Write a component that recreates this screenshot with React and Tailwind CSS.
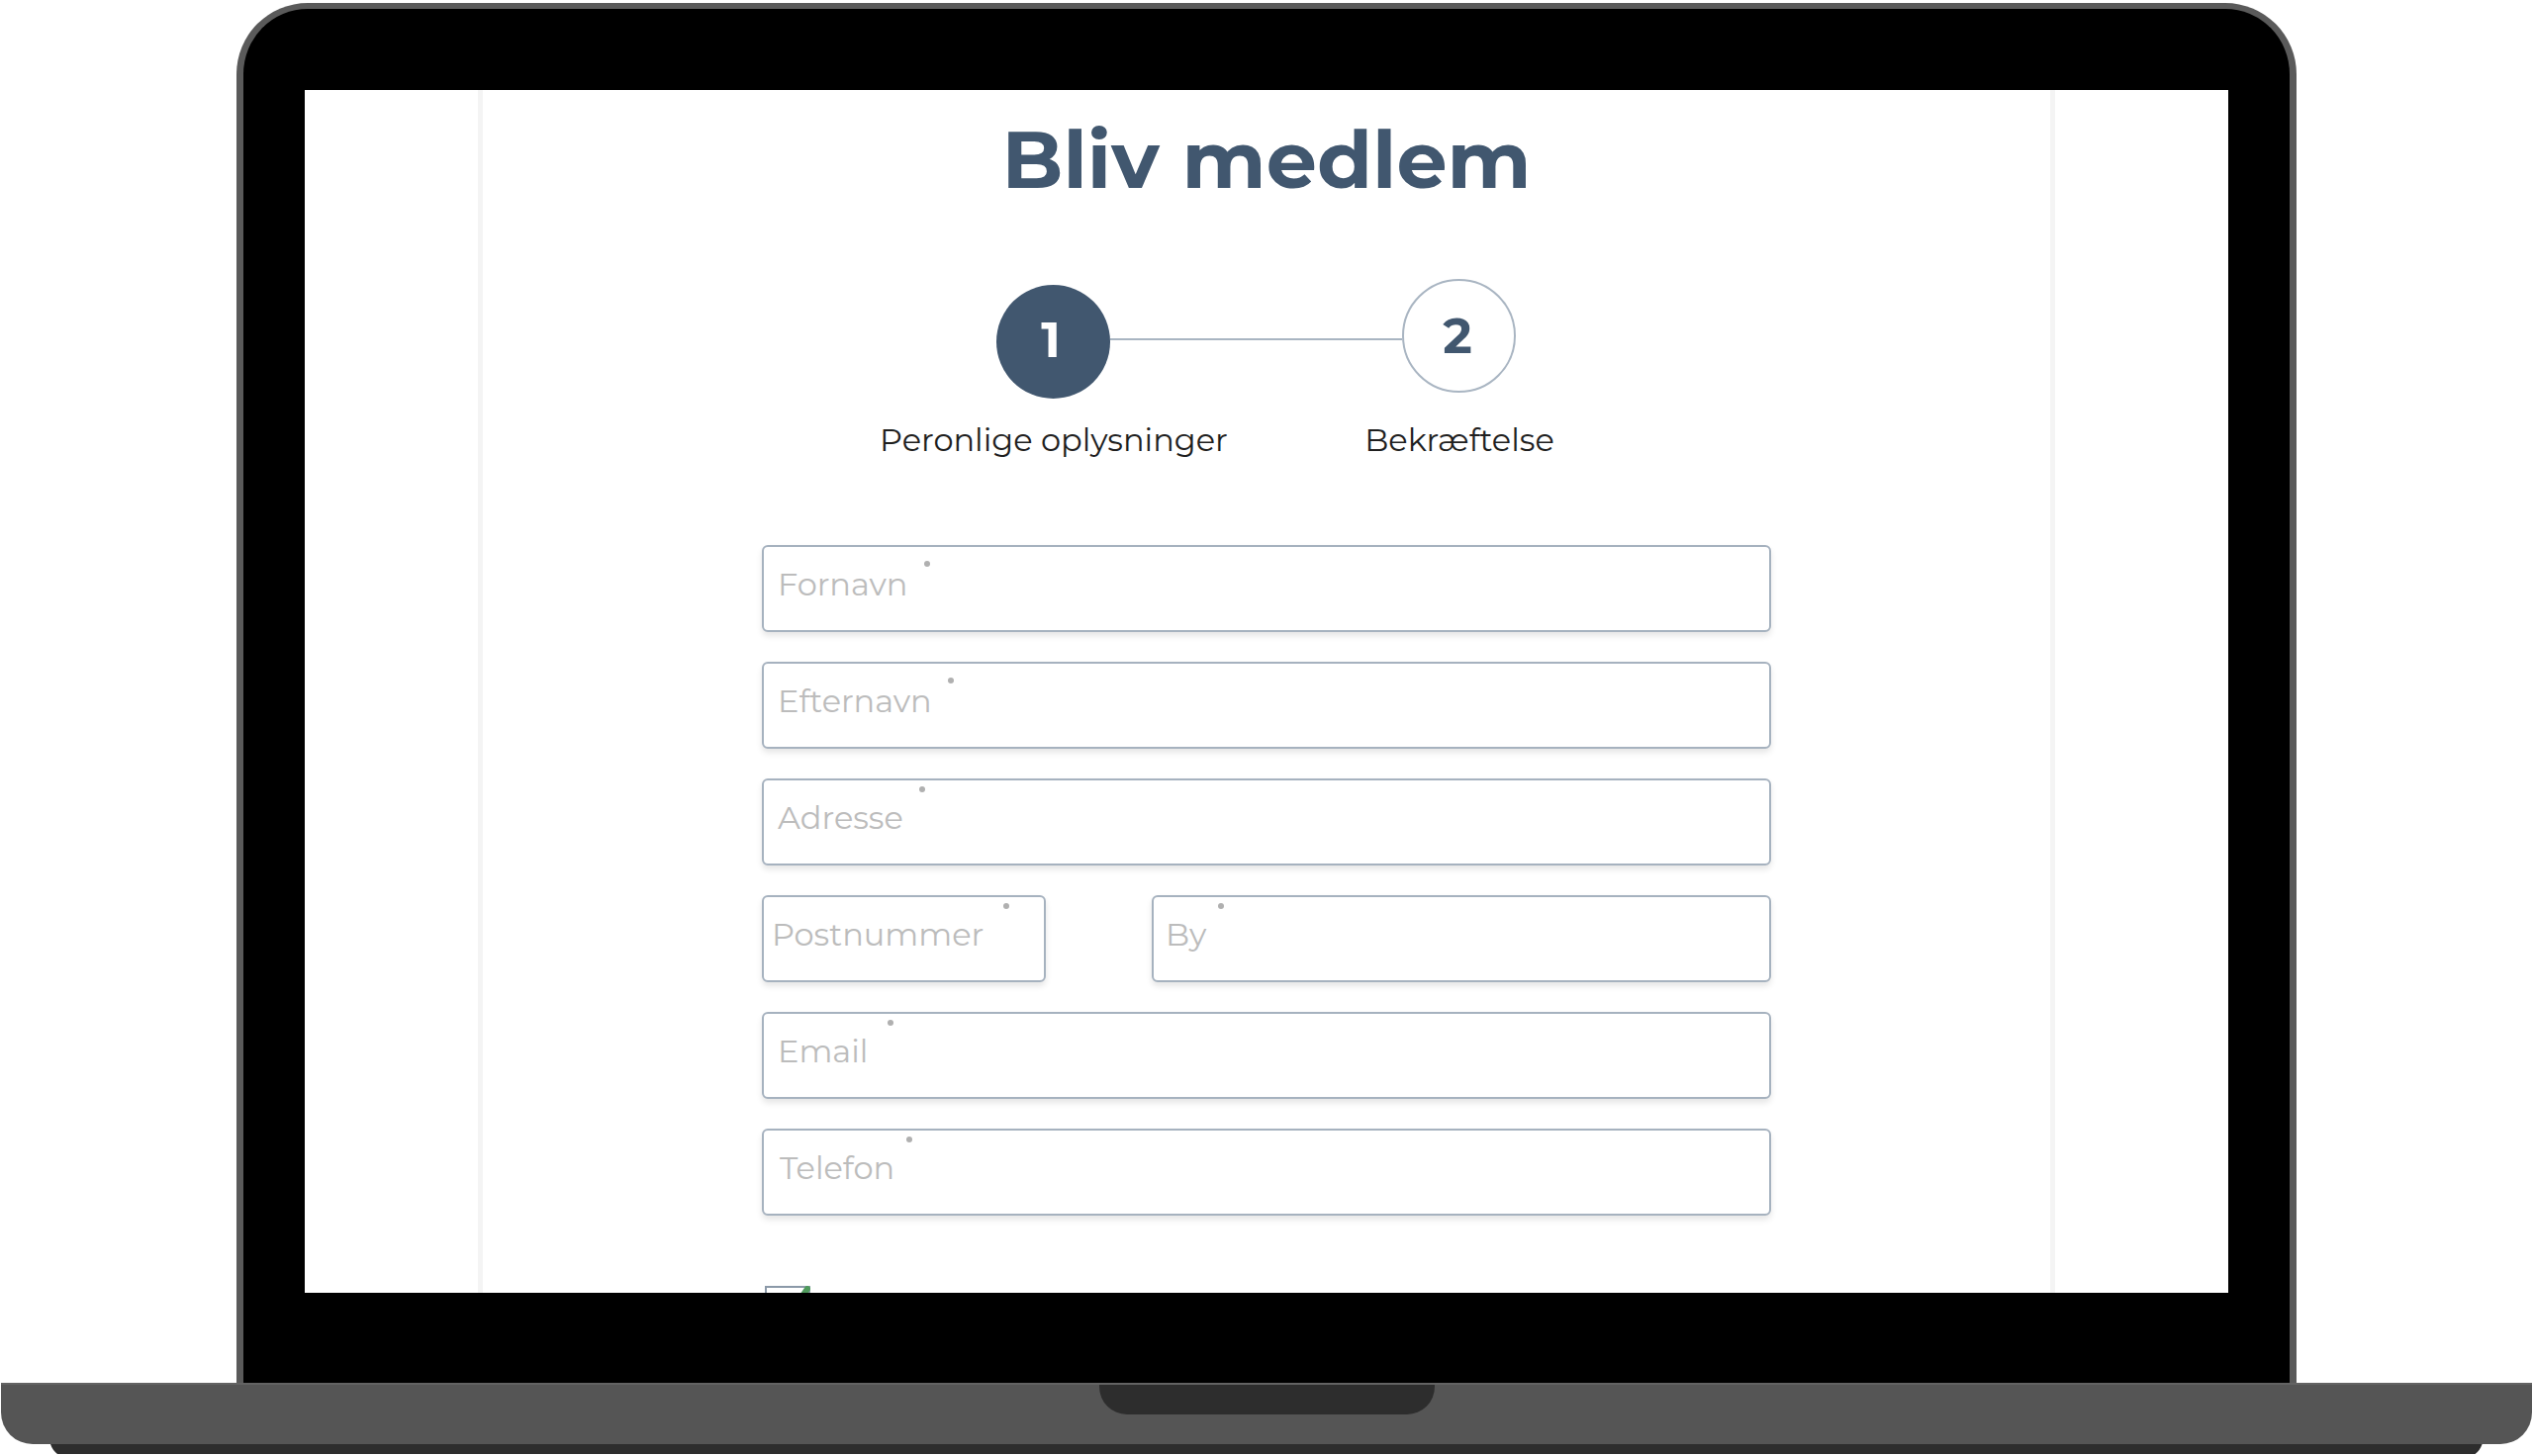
import React from "react";

const steps = [
  { number: 1, label: "Peronlige oplysninger", current: true },
  { number: 2, label: "Bekræftelse", current: false },
];

function Step({ number, label, current }) {
  const line = <span className="h-[2px] flex-1 self-center bg-[#a9b5c2]" />;
  const space = <span className="flex-1" />;
  return (
    <li aria-current={current ? "step" : undefined} className="flex flex-1 flex-col items-center gap-[22px]">
      <div className={current ? "flex h-[121px] w-full items-end" : "flex h-[121px] w-full items-start"}>
        {current ? space : line}
        <span
          className={
            current
              ? "flex size-[115px] items-center justify-center rounded-full bg-[#41576f] pr-1.5 pb-1 text-[50px] font-bold text-white"
              : "flex size-[115px] items-center justify-center rounded-full border-2 border-[#a9b5c2] bg-white pr-1 text-[50px] font-bold text-[#41576f]"
          }
        >
          {number}
        </span>
        {current ? line : space}
      </div>
      <span className="text-[32px] leading-10 whitespace-nowrap text-[#1f1f1f]">{label}</span>
    </li>
  );
}

function Field({ id, label, type = "text", wide = "w-full", inset = "pl-3.5", dot = "ml-5 mt-1.5" }) {
  return (
    <div
      className={`flex h-[88px] overflow-hidden rounded-md border-2 border-[#a6b2bf] bg-white shadow-[0_4px_6px_rgba(0,0,0,0.1)] ${wide}`}
    >
      <label htmlFor={id} className={`flex text-[32px] leading-10 text-[#bcbcbc] ${inset}`}>
        <span className="pt-[18px]">{label}</span>
        <span aria-hidden="true" className={`size-1.5 shrink-0 rounded-full bg-[#b0b0b0] ${dot}`} />
      </label>
      <input id={id} type={type} required className="min-w-0 flex-1 bg-transparent px-3 text-[32px] outline-none" />
    </div>
  );
}

function MemberForm() {
  return (
    <form className="mx-auto mt-[86px] w-[1020px] max-w-full">
      <div className="flex flex-col gap-[30px]">
        <Field id="fornavn" label="Fornavn" dot="ml-4 mt-3.5" />
        <Field id="efternavn" label="Efternavn" dot="ml-4 mt-3.5" />
        <Field id="adresse" label="Adresse" dot="ml-4 mt-1.5" />
        <div className="flex justify-between">
          <Field id="postnummer" label="Postnummer" wide="w-[287px]" inset="pl-2" dot="ml-5 mt-1.5" />
          <Field id="by" label="By" wide="w-[626px]" inset="pl-3" dot="ml-3 mt-1.5" />
        </div>
        <Field id="email" label="Email" type="email" dot="ml-5 mt-1.5" />
        <Field id="telefon" label="Telefon" type="tel" inset="pl-4" dot="ml-3 mt-1.5" />
      </div>
      <div className="mt-[71px] h-[7px] overflow-hidden">
        <div className="relative ml-[3px] w-[46px]">
          <input
            type="checkbox"
            defaultChecked
            aria-label="Accepter"
            className="block size-[46px] appearance-none border-2 border-[#8b99a8] bg-white"
          />
          <svg viewBox="0 0 46 46" className="pointer-events-none absolute inset-0 size-full" aria-hidden="true">
            <path d="M10 24 L20 36 L43 3" fill="none" stroke="#4f9a5c" strokeWidth="6" strokeLinecap="round" />
          </svg>
        </div>
      </div>
    </form>
  );
}

export default function App() {
  return (
    <div className="bg-white font-['Montserrat','Inter',sans-serif]">
      <div className="pt-[3px]">
        <div className="mx-auto w-[81.3%] rounded-t-[72px] border-x-[7px] border-t-[6px] border-[#5a5a5a] bg-black px-[62px] pt-[82px] pb-[91px]">
          <main className="bg-white">
            <div className="mx-auto w-[82%] border-x-[5px] border-[#f4f4f4] pt-[22px]">
              <h1 className="text-center text-[81px] leading-24 font-bold text-[#41576f]">Bliv medlem</h1>
              <ol className="mx-auto mt-[73px] flex w-[820px] -translate-x-2.5">
                {steps.map((step) => (
                  <Step key={step.number} {...step} />
                ))}
              </ol>
              <MemberForm />
            </div>
          </main>
        </div>
        <div className="mx-px flex h-[62px] justify-center rounded-b-[32px] border-t-2 border-[#636363] bg-[#555555]">
          <div className="h-[30px] w-[339px] rounded-b-[28px] bg-[#2d2d2d]" />
        </div>
        <svg viewBox="0 0 2456 10" preserveAspectRatio="none" className="mx-auto block h-[10px] w-[96%]" aria-hidden="true">
          <path d="M0 0 H2456 Q2454 6 2449 10 H7 Q2 6 0 0Z" fill="#2d2d2d" />
        </svg>
      </div>
    </div>
  );
}
